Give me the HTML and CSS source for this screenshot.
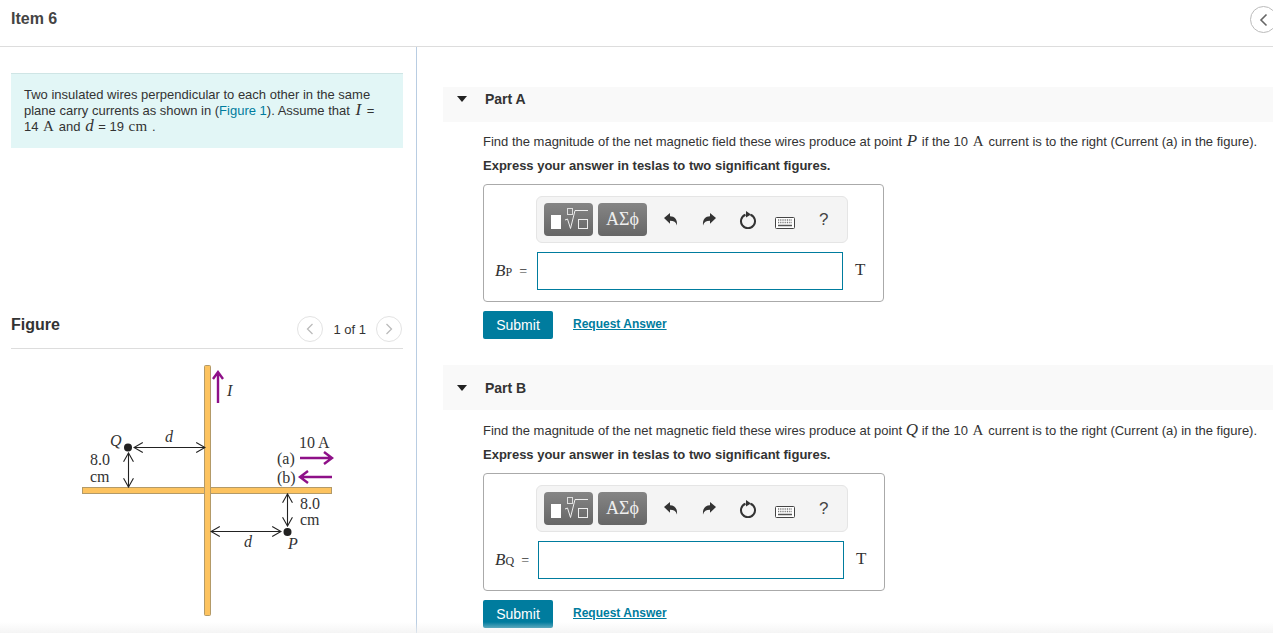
FILE: index.html
```html
<!doctype html>
<html>
<head>
    <meta charset="utf-8">
    <title>Item 6</title>
    <link rel="stylesheet" href="styles.css">
</head>
<body>
<svg class="defs" width="0" height="0">
    <defs>
        <symbol id="i-templates" viewBox="0 0 49 33">
            <rect x="7" y="12" width="10" height="14" fill="#fff"/>
            <rect x="23.500" y="5.500" width="5" height="6" fill="none" stroke="#ddd"/>
            <path d="M21 17l2.500-1 3 9.500 4.500-18h13" fill="none" stroke="#eee" stroke-width="1"/>
            <rect x="34.500" y="16.500" width="9" height="9" fill="none" stroke="#eee"/>
        </symbol>
        <symbol id="i-undo" viewBox="0 0 16 16">
            <path d="M1 6l6-5v3.200c4.500 0 7.500 2.800 7 9.300-1-3.400-3.200-4.800-7-4.800v3z" fill="#333"/>
        </symbol>
        <symbol id="i-redo" viewBox="0 0 16 16">
            <path d="M15 6l-6-5v3.200c-4.500 0-7.500 2.800-7 9.300 1-3.400 3.200-4.800 7-4.800v3z" fill="#333"/>
        </symbol>
        <symbol id="i-reset" viewBox="0 0 18 18">
            <path d="M6.500 3.700a7 7 0 1 0 5 0" fill="none" stroke="#333" stroke-width="2"/>
            <path d="M7 0l5 3.500-5 3z" fill="#333"/>
        </symbol>
        <symbol id="i-keys" viewBox="0 0 20 12">
            <rect x=".5" y=".5" width="19" height="11" rx="1" fill="#fff" stroke="#444"/>
            <path d="M3 3h14M3 5.500h14" stroke="#777" stroke-width="1.500" stroke-dasharray="1 .8"/>
            <path d="M3 8.500h14" stroke="#555" stroke-width="1.500"/>
        </symbol>
    </defs>
</svg>

<div class="page">
    <header class="top">
        <h1>Item 6</h1>
        <span class="collapse">
            <svg width="9" height="14" viewBox="0 0 9 14"><path d="M7.500 1.500L2 7l5.500 5.500" fill="none" stroke="#666" stroke-width="1.600"/></svg>
        </span>
    </header>

    <div class="cols">
        <aside class="left">
            <div class="intro">
                Two insulated wires perpendicular to each other in the same plane carry currents as shown in (<a href="#">Figure 1</a>). Assume that <i class="math big wide">I</i> =<br>
                14 <span class="math">A</span> and <i class="math big">d</i> = 19 <span class="math">cm</span> .
            </div>

            <div class="fig-head">
                <h2>Figure</h2>
                <div class="pager">
                    <span class="round"><svg width="8" height="12" viewBox="0 0 8 12"><path d="M6.500 1L1.500 6l5 5" fill="none" stroke="#bbb" stroke-width="1.300"/></svg></span>
                    <span class="count">1 of 1</span>
                    <span class="round"><svg width="8" height="12" viewBox="0 0 8 12"><path d="M1.500 1l5 5-5 5" fill="none" stroke="#bbb" stroke-width="1.300"/></svg></span>
                </div>
            </div>

            <svg class="figure" width="290" height="270" viewBox="60 360 290 270">
                <defs>
                    <marker id="open" viewBox="0 0 10 10" refX="9" refY="5" markerWidth="11" markerHeight="11" markerUnits="userSpaceOnUse" orient="auto-start-reverse">
                        <path d="M1 0.500L9 5 1 9.500" fill="none" stroke="#222" stroke-width="1"/>
                    </marker>
                </defs>
                <!-- wires -->
                <rect class="wire" x="82.500" y="488.500" width="249" height="6"/>
                <rect class="wire" x="204.500" y="366.500" width="6" height="250" rx="1"/>
                <!-- current arrows -->
                <path class="cur" d="M218 404V373M213 380l5-7 5 7"/>
                <path class="cur" d="M300 459h32M324 453l8 6-8 6"/>
                <path class="cur" d="M332 478h-32M308 472l-8 6 8 6"/>
                <!-- dimensions -->
                <path class="dim" d="M134 448.500H205" marker-start="url(#open)" marker-end="url(#open)"/>
                <path class="dim" d="M128.500 454V488" marker-start="url(#open)" marker-end="url(#open)"/>
                <path class="dim" d="M287.500 495V527" marker-start="url(#open)" marker-end="url(#open)"/>
                <path class="dim" d="M211 532.500H281" marker-start="url(#open)" marker-end="url(#open)"/>
                <circle cx="128" cy="448.500" r="4" fill="#222"/>
                <circle cx="287.500" cy="533" r="4" fill="#222"/>
                <!-- labels -->
                <text class="it" x="110" y="447">Q</text>
                <text class="it" x="165" y="443">d</text>
                <text class="it" x="244" y="548">d</text>
                <text class="it" x="288" y="550">P</text>
                <text class="it" x="227" y="397">I</text>
                <text x="90" y="466">8.0</text>
                <text x="90" y="483">cm</text>
                <text x="299" y="449">10 A</text>
                <text x="277" y="465">(a)</text>
                <text x="277" y="484">(b)</text>
                <text x="300" y="510">8.0</text>
                <text x="300" y="526">cm</text>
            </svg>
        </aside>

        <main class="right">
            <section class="part">
                <div class="part-head">
                    <span class="caret"></span>
                    <h3>Part A</h3>
                </div>
                <div class="part-body">
                    <p class="question">Find the magnitude of the net magnetic field these wires produce at point <i class="math big">P</i> if the 10 <span class="math">A</span> current is to the right (Current (a) in the figure).</p>
                    <p class="express">Express your answer in teslas to two significant figures.</p>
                    <div class="answer">
                        <div class="toolbar">
                            <span class="tbtn"><svg width="49" height="33"><use href="#i-templates"/></svg></span>
                            <span class="tbtn greek">ΑΣϕ</span>
                            <svg class="ic" width="16" height="16"><use href="#i-undo"/></svg>
                            <svg class="ic" width="16" height="16"><use href="#i-redo"/></svg>
                            <svg class="ic" width="18" height="18"><use href="#i-reset"/></svg>
                            <svg class="ic keys" width="20" height="12"><use href="#i-keys"/></svg>
                            <span class="help">?</span>
                        </div>
                        <div class="line">
                            <label><i>B</i><span class="sub">P</span> <span class="eq">=</span></label>
                            <div class="input"></div>
                            <span class="unit">T</span>
                        </div>
                    </div>
                    <div class="actions">
                        <span class="submit">Submit</span>
                        <a class="req" href="#">Request Answer</a>
                    </div>
                </div>
            </section>

            <section class="part part-b">
                <div class="part-head">
                    <span class="caret"></span>
                    <h3>Part B</h3>
                </div>
                <div class="part-body">
                    <p class="question">Find the magnitude of the net magnetic field these wires produce at point <i class="math big tight">Q</i> if the 10 <span class="math">A</span> current is to the right (Current (a) in the figure).</p>
                    <p class="express">Express your answer in teslas to two significant figures.</p>
                    <div class="answer">
                        <div class="toolbar">
                            <span class="tbtn"><svg width="49" height="33"><use href="#i-templates"/></svg></span>
                            <span class="tbtn greek">ΑΣϕ</span>
                            <svg class="ic" width="16" height="16"><use href="#i-undo"/></svg>
                            <svg class="ic" width="16" height="16"><use href="#i-redo"/></svg>
                            <svg class="ic" width="18" height="18"><use href="#i-reset"/></svg>
                            <svg class="ic keys" width="20" height="12"><use href="#i-keys"/></svg>
                            <span class="help">?</span>
                        </div>
                        <div class="line">
                            <label><i>B</i><span class="sub">Q</span> <span class="eq">=</span></label>
                            <div class="input"></div>
                            <span class="unit">T</span>
                        </div>
                    </div>
                    <div class="actions">
                        <span class="submit">Submit</span>
                        <a class="req" href="#">Request Answer</a>
                    </div>
                </div>
            </section>
        </main>
    </div>
    <div class="fade"></div>
</div>
</body>
</html>
```

FILE: styles.css
```css
*{margin: 0; padding: 0; box-sizing: border-box;}
html,body{width: 100%; height: 100%; overflow: hidden; background: #fff;}
body{font-family: "Liberation Sans", Arial, sans-serif; font-size: 13px; color: #333;}
.defs{position: absolute;}
.page{height: 633px; position: relative; overflow: hidden; display: flex; flex-direction: column;}

.top{height: 47px; flex: none; display: flex; justify-content: space-between; padding: 10px 0 0 11px; border-bottom: 1px solid #ddd;}
.top h1{font-size: 16px; line-height: 18px; color: #444;}
.collapse{width: 27px; height: 27px; margin: -4px -4px 0 0; border: 1px solid #bbb; border-radius: 50%; display: flex; align-items: center; justify-content: center;}

.cols{flex: 1; display: flex; min-height: 0;}
.left{width: 417px; flex: none; border-right: 1px solid #b9cde2; padding: 26px 13px 0 11px;}
.intro{height: 75px; background: #e2f6f6; border-top: 1px solid #cfe5e5; padding: 13px 13px 0 13px; line-height: 16px; color: #333;}
.intro a{color: #007c9e; text-decoration: none;}
.math{font-family: "Liberation Serif", serif; font-size: 15px; letter-spacing: .3px; line-height: 0; padding: 0 1px;}
.big{font-size: 17px; letter-spacing: 0;}
.wide{padding: 0 2px;}
.tight{padding: 0;}

.fig-head{height: 50px; margin-top: 151px; padding-top: 17px; border-bottom: 1px solid #ddd; display: flex; justify-content: space-between;}
.fig-head h2{font-size: 16px; line-height: 18px; color: #333;}
.pager{display: flex; align-items: center; gap: 10px; height: 26px; padding-right: 1px;}
.round{width: 26px; height: 26px; border: 1px solid #e3e3e3; border-radius: 50%; display: flex; align-items: center; justify-content: center;}
.figure{display: block; margin: 10px 0 0 49px;}
.wire{fill: #fdc35f; stroke: #b39a68; stroke-width: 1;}
.cur{fill: none; stroke: #8e1088; stroke-width: 2.400;}
.dim{fill: none; stroke: #222; stroke-width: 1.100;}
.figure text{font-family: "Liberation Serif", serif; font-size: 16px; fill: #333;}
.figure .it{font-style: italic;}

.right{flex: 1; padding: 40px 0 0 26px; min-width: 0;}
.part-head{height: 35px; padding: 4px 0 0 14px; background: #f9f9f9; display: flex; align-items: flex-start;}
.part-b .part-head{height: 45px; padding-top: 15px;}
.part-b{margin-top: 26px;}
.part-head h3{font-size: 14px; line-height: 16px; color: #333; margin-left: 18px;}
.caret{width: 0; height: 0; border: 5.500px solid transparent; border-top: 6px solid #222; border-bottom: 0; margin-top: 5px;}
.part-body{padding: 11px 0 0 40px;}
.part-b .part-body{padding-top: 12px;}
.question{line-height: 17px;}
.express{font-weight: bold; line-height: 17px; margin-top: 7px;}
.answer{width: 401px; height: 118px; margin-top: 10px; border: 1px solid #aaa; border-radius: 4px; padding: 11px 0 0 11px;}
.part-b .answer{width: 402px;}
.toolbar{width: 312px; height: 47px; margin-left: 41px; background: #f4f4f4; border: 1px solid #e5e5e5; border-radius: 6px; display: flex; align-items: center; padding-left: 7px;}
.tbtn{width: 49px; height: 33px; border-radius: 4px; background: linear-gradient(#858585, #666); display: flex; align-items: center; justify-content: center; margin-right: 5px;}
.greek{font-family: "Liberation Serif", serif; font-size: 18px; color: #eee;}
.ic{flex: none; margin-left: 22px;}
.tbtn + .tbtn + .ic{margin-left: 11px;}
.keys{margin-left: 18px; margin-top: 6px;}
.help{margin-left: 24px; font-size: 17px; color: #444;}
.line{display: flex; align-items: center; margin-top: 8px; height: 40px;}
.line label{font-family: "Liberation Serif", serif; font-size: 17px; width: 42px; white-space: nowrap; color: #333;}
.part-b .line label{width: 43px;}
.sub{font-size: 12px;}
.eq{font-size: 14px; margin-left: 3px;}
.input{width: 306px; height: 38px; border: 1px solid #007c9e;}
.unit{font-family: "Liberation Serif", serif; font-size: 17px; margin: -2px 0 0 12px;}
.actions{display: flex; align-items: center; margin-top: 9px;}
.submit{width: 70px; height: 28px; line-height: 28px; text-align: center; background: #007c9e; color: #fff; font-size: 14px; border-radius: 2px;}
.req{margin-left: 20px; margin-top: -2px; font-size: 12px; font-weight: bold; color: #007c9e;}
.fade{position: absolute; left: 0; right: 0; bottom: 0; height: 11px; background: linear-gradient(rgba(240,240,240,0), rgba(240,240,240,.7));}
```
